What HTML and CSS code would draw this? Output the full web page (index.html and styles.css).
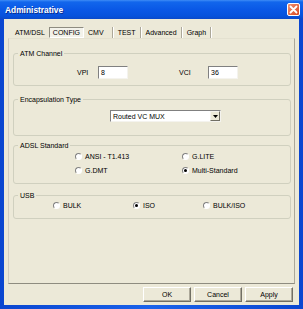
FILE: index.html
```
<!DOCTYPE html>
<html lang="en">
<head>
    <meta charset="UTF-8">
    <title>Administrative</title>
    <link rel="stylesheet" href="styles.css">
</head>
<body>
    <div class="window">
        <div class="titlebar">
            <span class="title">Administrative</span>
            <span class="close">
                <svg width="9" height="9" viewBox="0 0 9 9">
                    <path d="M1.5 1.5 L7.5 7.5 M7.5 1.5 L1.5 7.5" stroke="#fff" stroke-width="1.8" stroke-linecap="round"/>
                </svg>
            </span>
        </div>
        <div class="frame">
            <div class="tabs">
                <span class="tab">ATM/DSL</span>
                <span class="tab active">CONFIG</span>
                <span class="tab cmv">CMV</span>
                <span class="sep"></span>
                <span class="tab">TEST</span>
                <span class="sep"></span>
                <span class="tab">Advanced</span>
                <span class="sep"></span>
                <span class="tab">Graph</span>
                <span class="sep"></span>
            </div>
            <div class="panel">
                <fieldset class="group atm">
                    <legend>ATM Channel</legend>
                    <div class="atm-row">
                        <span class="lbl vpi">VPI</span>
                        <span class="input">8</span>
                        <span class="lbl vci">VCI</span>
                        <span class="input">36</span>
                    </div>
                </fieldset>
                <fieldset class="group encap">
                    <legend>Encapsulation Type</legend>
                    <div class="select">
                        <span class="select-text">Routed VC MUX</span>
                        <span class="select-btn">
                            <svg width="5" height="3" viewBox="0 0 5 3"><path d="M0 0 H5 L2.5 3 Z" fill="#000"/></svg>
                        </span>
                    </div>
                </fieldset>
                <fieldset class="group adsl">
                    <legend>ADSL Standard</legend>
                    <div class="radio-grid">
                        <span class="radio"><span class="dot"></span>ANSI - T1.413</span>
                        <span class="radio"><span class="dot"></span>G.LITE</span>
                        <span class="radio"><span class="dot"></span>G.DMT</span>
                        <span class="radio"><span class="dot checked"></span>Multi-Standard</span>
                    </div>
                </fieldset>
                <fieldset class="group usb">
                    <legend>USB</legend>
                    <div class="usb-row">
                        <span class="radio bulk"><span class="dot"></span>BULK</span>
                        <span class="radio iso"><span class="dot checked"></span>ISO</span>
                        <span class="radio"><span class="dot"></span>BULK/ISO</span>
                    </div>
                </fieldset>
            </div>
            <div class="buttons">
                <button>OK</button>
                <button>Cancel</button>
                <button>Apply</button>
            </div>
        </div>
    </div>
</body>
</html>
```

FILE: styles.css
```
body {
    margin: 0;
    font-family: "Liberation Sans", Arial, sans-serif;
    font-size: 7px;
    color: #000;
}
.window {
    width: 303px;
    height: 309px;
    background: linear-gradient(90deg, #0a46d0, #1a62ea 50%, #0a46d0);
    display: flex;
    flex-direction: column;
}
.titlebar {
    height: 19px;
    flex: none;
    display: flex;
    align-items: center;
    justify-content: space-between;
    padding: 0 3px 0 5px;
    background: linear-gradient(#3f8cf6 0, #1266ec 2px, #0a58e6 50%, #0652dc 85%, #0a49c9 100%);
}
.title {
    color: #fff;
    font-weight: bold;
    font-size: 8.4px;
    text-shadow: 1px 1px 0 #0a2f8f;
}
.close {
    width: 13px;
    height: 13px;
    box-sizing: border-box;
    border: 1px solid #fff;
    border-radius: 2px;
    background: linear-gradient(135deg, #f29272, #d9481f);
    display: flex;
    align-items: center;
    justify-content: center;
}
.frame {
    flex: 1;
    margin: 0 4px 4px;
    background: #ece9d8;
    padding-top: 8px;
    display: flex;
    flex-direction: column;
}
.tabs {
    height: 11px;
    display: flex;
    align-items: center;
    padding-left: 8px;
}
.tab {
    height: 11px;
    line-height: 11px;
    padding: 0 3px;
    box-sizing: border-box;
}
.tab.active {
    margin: 0 1px;
    border: 1px solid;
    border-color: #8e8c80 #fff #fff #8e8c80;
    background: #f3f2ea;
    line-height: 9px;
}
.tab.cmv {
    padding-right: 7px;
}
.sep {
    width: 1px;
    height: 11px;
    background: #aca899;
    border-right: 1px solid #fff;
    margin: 0 1px;
}
.panel {
    margin: 0 4px;
    height: 246px;
    box-sizing: border-box;
    border: 1px solid #e4e1d0;
    border-left-color: #d0cebf;
    border-right-color: #aca899;
    border-bottom-color: #8e8c80;
    padding: 10px 3px 0 4px;
}
.group {
    margin: 0;
    padding: 0;
    border: 1px solid #d0d0bf;
    border-radius: 3px;
    box-sizing: border-box;
    min-width: 0;
}
.group legend {
    padding: 0 2px;
    margin-left: 4px;
    line-height: 9px;
}
.atm {
    height: 37px;
    padding-top: 8px;
}
.encap {
    height: 41px;
    margin-top: 9px;
    padding-top: 6px;
}
.adsl {
    height: 43px;
    margin-top: 5px;
    padding-top: 1px;
}
.usb {
    height: 28px;
    margin-top: 7px;
}
.atm-row {
    display: flex;
    align-items: center;
    padding-left: 63px;
}
.lbl.vpi {
    width: 21px;
}
.lbl.vci {
    width: 29px;
    margin-left: 51px;
}
.input {
    width: 30px;
    height: 13px;
    box-sizing: border-box;
    border: 1px solid;
    border-color: #808080 #f4f3ee #f4f3ee #808080;
    background: #fff;
    padding-left: 2px;
    line-height: 11px;
}
.select {
    width: 111px;
    height: 12px;
    margin-left: 96px;
    box-sizing: border-box;
    border: 1px solid;
    border-color: #808080 #f4f3ee #f4f3ee #808080;
    background: #fff;
    display: flex;
    align-items: center;
    justify-content: space-between;
}
.select-text {
    padding-left: 2px;
}
.select-btn {
    width: 10px;
    height: 10px;
    box-sizing: border-box;
    border: 1px solid;
    border-color: #f4f3ee #716f64 #716f64 #f4f3ee;
    background: #ece9d8;
    display: flex;
    align-items: center;
    justify-content: center;
}
.radio-grid {
    display: grid;
    grid-template-columns: 107px auto;
    row-gap: 3px;
    padding-left: 61px;
}
.radio {
    display: flex;
    align-items: center;
    height: 11px;
}
.dot {
    width: 7px;
    height: 7px;
    box-sizing: border-box;
    border: 1px solid;
    border-color: #808080 #fff #fff #808080;
    border-radius: 50%;
    background: #fff;
    margin-right: 3px;
    display: flex;
    align-items: center;
    justify-content: center;
}
.dot.checked::after {
    content: "";
    width: 3px;
    height: 3px;
    border-radius: 50%;
    background: #000;
}
.usb-row {
    display: flex;
    padding-left: 39px;
}
.radio.bulk {
    width: 80px;
}
.radio.iso {
    width: 70px;
}
.buttons {
    display: flex;
    justify-content: flex-end;
    gap: 3px;
    margin-top: 3px;
    padding-right: 6px;
}
button {
    width: 48px;
    height: 15px;
    padding: 0;
    font-family: inherit;
    font-size: 7px;
    color: #000;
    background: #ece9d8;
    border: 1px solid;
    border-color: #fff #716f64 #716f64 #fff;
    box-shadow: inset -1px -1px 0 #aca899;
}
```
